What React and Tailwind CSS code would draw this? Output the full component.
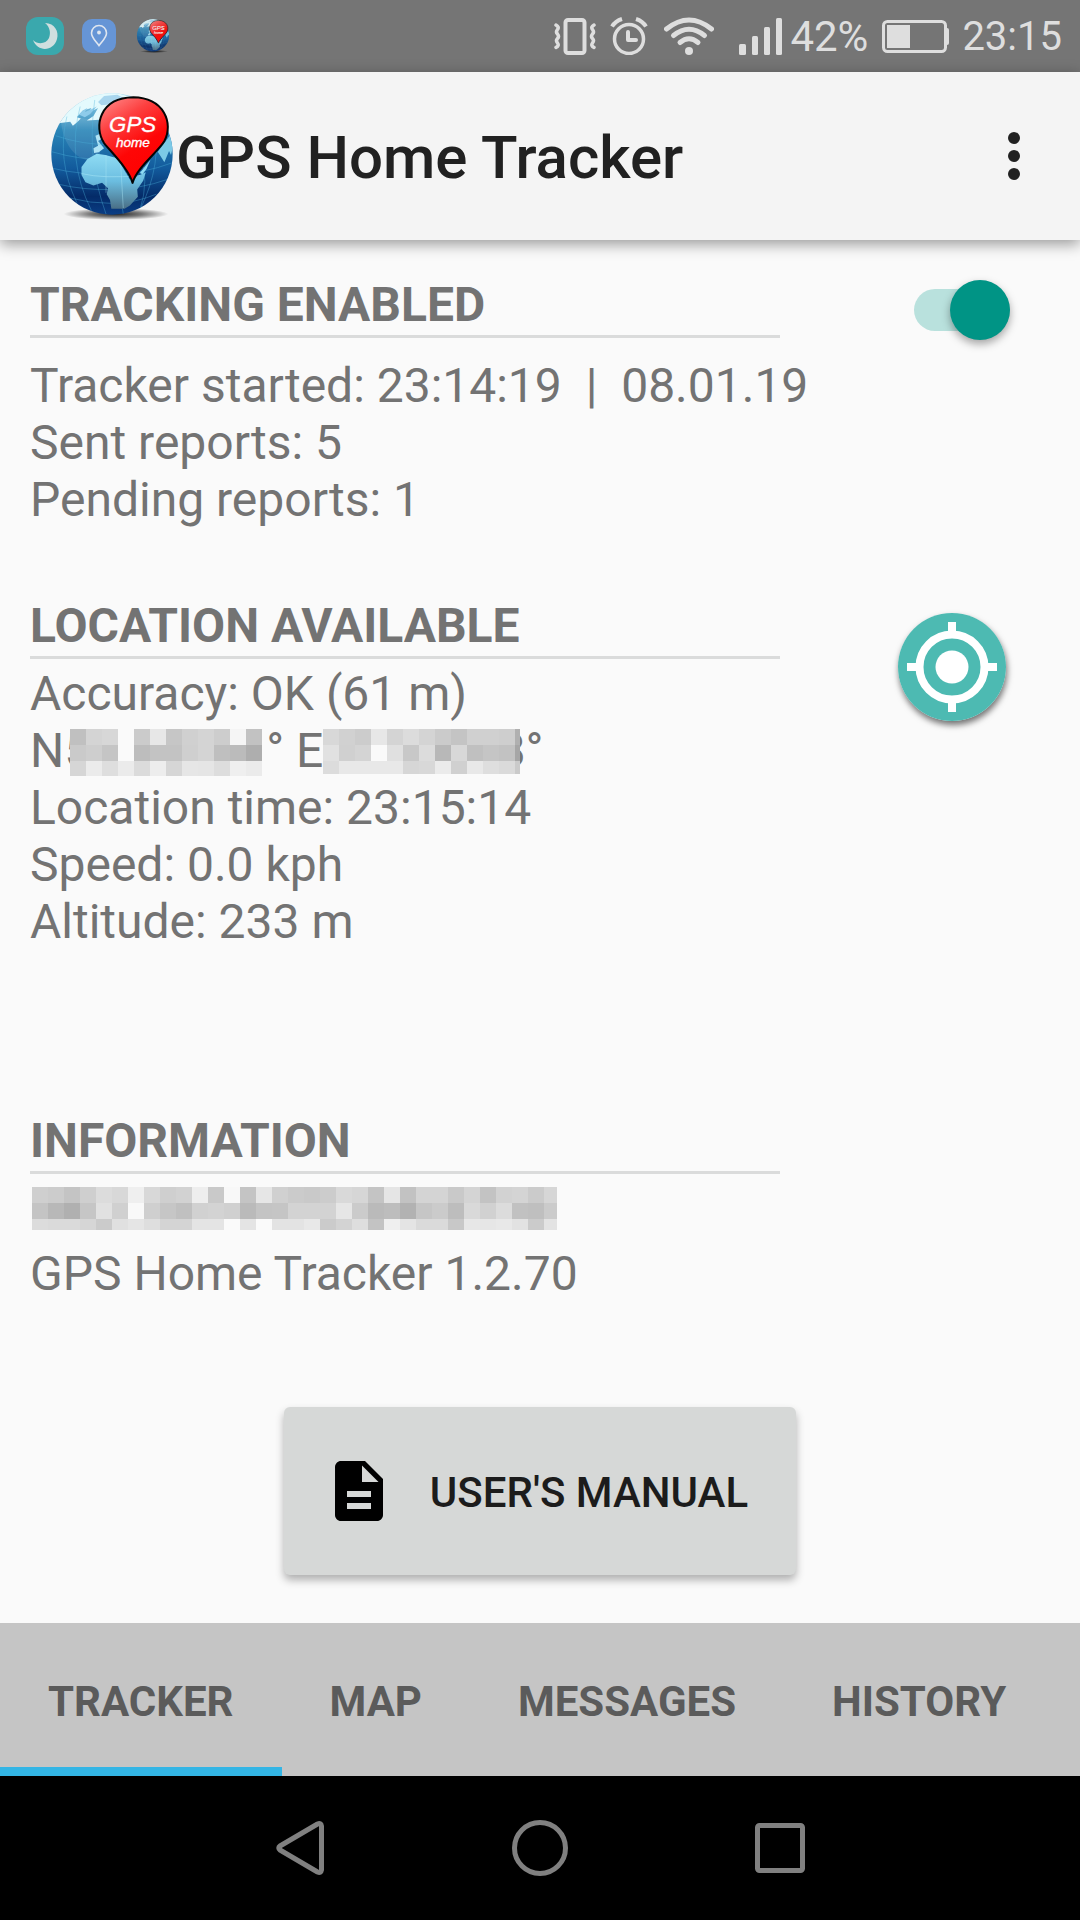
import React, { useState } from "react";
import { MdDescription } from "react-icons/md";

function GlobeLogo({ id, className }) {
  const ocean = id + "-ocean";
  const land = id + "-land";
  const pin = id + "-pin";
  const shade = id + "-shade";
  const clip = id + "-clip";
  return (
    <svg viewBox="60 36 372 386" className={className} aria-hidden="true">
      <defs>
        <linearGradient id={ocean} x1="0" y1="0" x2="0" y2="1">
          <stop offset="0" stopColor="#a9dcf0" />
          <stop offset="0.3" stopColor="#2a86b8" />
          <stop offset="0.62" stopColor="#125a9c" />
          <stop offset="0.85" stopColor="#042b68" />
          <stop offset="1" stopColor="#0a3d84" />
        </linearGradient>
        <linearGradient id={land} x1="0" y1="0" x2="0" y2="1">
          <stop offset="0" stopColor="#8fdcf4" />
          <stop offset="0.5" stopColor="#6bbde0" />
          <stop offset="1" stopColor="#4a6f86" />
        </linearGradient>
        <linearGradient id={pin} x1="0.1" y1="0" x2="0.6" y2="1">
          <stop offset="0" stopColor="#ff8a8a" />
          <stop offset="0.3" stopColor="#fd4040" />
          <stop offset="0.65" stopColor="#fe0606" />
          <stop offset="1" stopColor="#ff0000" />
        </linearGradient>
        <radialGradient id={shade}>
          <stop offset="0" stopColor="#000" stopOpacity="0.85" />
          <stop offset="0.5" stopColor="#000" stopOpacity="0.5" />
          <stop offset="1" stopColor="#000" stopOpacity="0" />
        </radialGradient>
        <clipPath id={clip}>
          <circle cx="246" cy="223" r="183" />
        </clipPath>
      </defs>
      <ellipse cx="258" cy="404" rx="158" ry="18" fill={`url(#${shade})`} />
      <circle cx="246" cy="223" r="183" fill={`url(#${ocean})`} />
      <g clipPath={`url(#${clip})`}>
        <path d="M84 130C110 80 160 40 250 36L300 50L208 120L170 122L190 108L204 84L176 98L184 84L158 92L140 112L152 116L140 128L128 138L120 126Z" fill="#e4fafd" />
        <path d="M204 66L222 48L262 44L286 56L250 72L214 76Z" fill="#a9d6ee" />
        <path d="M146 104L160 90L172 84L164 96L184 88L200 80L180 102L164 112Z" fill="#8ecbea" />
        <path d="M196 168L210 162L214 178L204 184L214 196L222 206L206 218L192 220L190 206L204 198Z" fill="#a8e0f4" />
        <path d="M92 120C120 100 160 120 210 120L210 240C150 260 96 200 92 120Z" fill="#fff" fillOpacity="0.1" />
        <g fill="none" stroke="#4db4dc" strokeOpacity="0.45" strokeWidth="2.5">
          <path d="M76 168Q160 196 240 194T420 150" />
          <path d="M64 216Q150 242 246 240T428 200" />
          <path d="M66 266Q150 286 246 284T426 250" />
          <path d="M84 314Q160 332 246 330T412 300" />
          <path d="M120 356Q180 372 246 372T380 344" />
          <path d="M110 110Q78 240 140 370" />
          <path d="M150 80Q108 240 184 394" />
          <path d="M194 60Q168 240 228 404" />
          <path d="M246 180Q262 300 280 404" />
          <path d="M372 120Q400 250 330 392" />
          <path d="M330 230Q360 300 330 392" />
        </g>
        <path d="M172 238L200 222L226 226L262 236L300 300L348 278L340 304L322 330L324 352L300 378L284 388L244 388L240 362L230 344L234 326L216 310L190 318L166 308L154 286L154 262Z" fill={`url(#${land})`} />
        <path d="M330 280L362 240L350 268L338 284Z" fill="#8fdcf4" />
        <path d="M384 216L404 190L420 168L430 200L424 226L418 214L404 248Z" fill="#7cc9e6" />
        <path d="M154 282Q220 298 330 288" fill="none" stroke="#aeeaf8" strokeOpacity="0.6" strokeWidth="2.5" />
        <path d="M228 226L228 340M272 250L280 386" fill="none" stroke="#aeeaf8" strokeOpacity="0.5" strokeWidth="2.5" />
      </g>
      <path d="M308 310C296 268 248 222 222 190C190 140 208 54 310 52C404 54 432 130 404 184C384 218 322 262 308 310Z" fill={`url(#${pin})`} stroke="#050505" strokeWidth="6" strokeLinejoin="round" />
      <text x="308" y="158" textAnchor="middle" fontFamily="Liberation Sans, sans-serif" fontSize="67" fontStyle="italic" fill="#fff" stroke="#fff" strokeWidth="1">GPS</text>
      <text x="309" y="203" textAnchor="middle" fontFamily="Liberation Sans, sans-serif" fontSize="41" fontStyle="italic" fill="#fff" stroke="#fff" strokeWidth="1">home</text>
    </svg>
  );
}

function StatusBar() {
  return (
    <header className="flex h-[72px] items-center justify-between bg-[#757575] pl-[26px] pr-[18px] text-[42px] leading-none text-[#dedede]">
      <div className="flex items-center">
        <svg viewBox="0 0 38 38" className="size-[38px]" aria-label="Night mode">
          <rect width="38" height="38" rx="12" fill="#3aa8ad" />
          <path d="M19 6C29 6 33 15 31 22C28 34 12 36 7 23C12 28 20 27 23 21C25 16 24 10 19 6Z" fill="#cfdfdf" />
        </svg>
        <svg viewBox="0 0 34 34" className="ml-[18px] size-[34px]" aria-label="Location">
          <rect width="34" height="34" rx="10" fill="#6695d6" />
          <path d="M17 26.500C14 22 9.500 19 9.500 14A7.500 7.500 0 0 1 24.500 14C24.500 19 20 22 17 26.500Z" fill="none" stroke="#dfe6f0" strokeWidth="1.600" />
          <circle cx="17" cy="13.500" r="1.900" fill="#dfe6f0" />
        </svg>
        <GlobeLogo id="small" className="ml-5 h-[34px] w-[34px] opacity-90" />
      </div>
      <div className="flex items-center">
        <svg viewBox="0 0 42 37" className="h-[37px] w-[42px]" fill="none" stroke="currentColor" aria-label="Vibrate">
          <rect x="11.500" y="2" width="19" height="33" rx="2.500" strokeWidth="4" />
          <path d="M2 7q3.500 2 1.500 4.500t0 4.500q2 2.500 0 4.500t0 4.500q2 2.500-1.500 4.500" strokeWidth="3.500" strokeLinecap="round" />
          <path d="M40 7q-3.500 2-1.500 4.500t0 4.500q-2 2.500 0 4.500t0 4.500q-2 2.500 1.500 4.500" strokeWidth="3.500" strokeLinecap="round" />
        </svg>
        <svg viewBox="0 0 38 38" className="ml-[14px] size-[38px]" fill="none" stroke="currentColor" aria-label="Alarm">
          <circle cx="19" cy="22" r="14.500" strokeWidth="3.500" />
          <path d="M18 15V23H26" strokeWidth="4" strokeLinecap="round" strokeLinejoin="round" />
          <path d="M2 9.500Q5.500 4 12 2M36 9.500Q32.500 4 26 2" strokeWidth="4" />
        </svg>
        <svg viewBox="0 0 50 38" className="ml-4 h-[38px] w-[50px]" fill="none" stroke="currentColor" strokeWidth="5" strokeLinecap="round" aria-label="Wi-Fi">
          <path d="M2.500 12Q25-6 47.500 12" />
          <path d="M9.500 18.500Q25 6 40.500 18.500" />
          <path d="M16 25.500Q25 18 34 25.500" />
          <circle cx="25" cy="34" r="4" fill="currentColor" stroke="none" />
        </svg>
        <svg viewBox="0 0 44 37" className="ml-6 h-[37px] w-[44px]" fill="currentColor" aria-label="Signal">
          <rect x="1" y="26" width="7" height="11" rx="1.500" />
          <rect x="14" y="18" width="6" height="19" rx="1.500" />
          <rect x="26" y="9" width="6" height="28" rx="1.500" />
          <rect x="38" y="0" width="6" height="37" rx="1.500" />
        </svg>
        <span className="ml-2 pt-[2px]">42%</span>
        <svg viewBox="0 0 68 33" className="ml-[14px] h-[33px] w-[68px]" fill="currentColor" aria-label="Battery">
          <rect x="1.500" y="1.500" width="62" height="30" rx="4" fill="none" stroke="currentColor" strokeWidth="3" />
          <rect x="5" y="5" width="23" height="23" />
          <path d="M64 8H65Q67 8 67 10V23Q67 25 65 25H64Z" />
        </svg>
        <time className="ml-3 pt-[2px] text-[40px] leading-none">23:15</time>
      </div>
    </header>
  );
}

function AppBar() {
  return (
    <div className="relative flex h-[168px] items-center bg-[#f4f4f4] pl-[50px] pr-[46px] shadow-[0_4px_14px_rgba(0,0,0,0.4)]">
      <GlobeLogo id="large" className="h-[128px] w-[124px]" />
      <h1 className="ml-[2px] flex-1 pt-1 text-[60px] font-medium leading-[72px] text-[#212121]">GPS Home Tracker</h1>
      <button type="button" aria-label="More options" className="flex h-20 w-10 items-center justify-center">
        <svg viewBox="0 0 14 50" className="h-[50px] w-[14px]" fill="#212121">
          <circle cx="7" cy="7" r="6" />
          <circle cx="7" cy="25" r="6" />
          <circle cx="7" cy="43" r="6" />
        </svg>
      </button>
    </div>
  );
}

const LATITUDE = [
  "c0 d4 d7 fa cb e7 c6 d0 d4 cd f5 c2",
  "ca ce c5 fa bd c3 c3 cf d4 bf bb ae",
  "d6 eb de eb db ed d6 e6 e5 dd ef eb",
];
const LONGITUDE = [
  "d8 d1 cc e7 d4 dc d4 cb c4 d0 d0 ce b0",
  "e1 d0 d4 fa e0 c8 dc b8 d8 c0 c5 c2 a6",
  "dc e8 e8 e8 e8 d6 d8 eb d0 e8 de da ca",
];
const ACCOUNT = [
  "cf cc c4 cf dc d8 ef d8 cf d2 ee c9 f8 c4 e6 d0 cb c9 cc d9 d6 c4 e5 c2 d4 d4 c9 d4 c3 d2 d4 cb d6",
  "c4 b8 b0 c6 e1 d0 f9 cf c6 c0 d1 d3 d0 ba c4 c5 d3 d3 d3 e6 cb ba bd b2 c6 cb bd d9 d1 dc c1 bf cb",
  "dc da da d6 cb e0 e5 de d4 d4 e4 e4 fa e4 fa e3 e3 e8 cb d3 de c3 ef e4 da da c8 e7 e6 e8 e2 cb e3",
];

function Mosaic({ rows, width, height, className }) {
  return (
    <svg viewBox={`0 0 ${width} ${height}`} width={width} height={height} className={className} shapeRendering="crispEdges" aria-label="Hidden">
      {rows.map((row, y) =>
        row.split(" ").map((v, x) => (
          <rect key={`${x}-${y}`} x={x * 16} y={y * 16} width="16" height="16" fill={`#${v}${v}${v}`} />
        ))
      )}
    </svg>
  );
}

function Section({ title, side, children, className }) {
  return (
    <section className={`grid grid-cols-[5fr_2fr] ${className}`}>
      <div className="min-w-0 whitespace-nowrap">
        <h2 className="border-b-[3px] border-[#dadbdb] pb-[2px] font-bold">{title}</h2>
        {children}
      </div>
      <div className="flex items-start justify-end">{side}</div>
    </section>
  );
}

const TABS = ["TRACKER", "MAP", "MESSAGES", "HISTORY"];

export default function App() {
  const [enabled, setEnabled] = useState(true);
  const [tab, setTab] = useState("TRACKER");
  return (
    <div className="flex min-h-screen flex-col bg-[#fafafa] font-[Roboto,sans-serif]">
      <StatusBar />
      <AppBar />
      <main className="flex flex-1 flex-col pb-12 pl-[30px] pt-9 text-[48px] leading-[57px] text-[#737373]">
        <Section
          title="TRACKING ENABLED"
          className=""
          side={
            <input
              type="checkbox"
              role="switch"
              aria-label="Tracking enabled"
              checked={enabled}
              onChange={(e) => setEnabled(e.target.checked)}
              className="mr-[70px] mt-[13px] h-[42px] w-24 appearance-none rounded-full bg-[#b9e1dd] before:-mt-[9px] before:block before:size-[60px] before:rounded-full before:bg-[#009485] before:shadow-[0_4px_8px_rgba(0,0,0,0.35)] checked:before:ml-auto"
            />
          }
        >
          <div className="mt-[19px]">
            <p className="whitespace-pre">{"Tracker started: 23:14:19  |  08.01.19"}</p>
            <p>Sent reports: 5</p>
            <p>Pending reports: 1</p>
          </div>
        </Section>

        <Section
          title="LOCATION AVAILABLE"
          className="mt-[69px]"
          side={
            <button type="button" aria-label="Locate" className="mr-[74px] mt-4 rounded-full shadow-[1px_4px_6px_rgba(0,0,0,0.55)]">
              <svg viewBox="0 0 108 108" className="size-[108px]">
                <circle cx="54" cy="54" r="54" fill="#4dbab2" />
                <g fill="none" stroke="#fff" strokeWidth="8">
                  <circle cx="54" cy="54" r="32.500" />
                  <path d="M54 9V20M54 88V99M9 54H20M88 54H99" />
                </g>
                <circle cx="54" cy="54" r="16.500" fill="#fff" />
              </svg>
            </button>
          }
        >
          <div className="mt-[6px]">
            <p>Accuracy: OK (61 m)</p>
            <p className="flex">
              <span>N</span>
              <span className="relative w-[202px]">
                5
                <Mosaic rows={LATITUDE} width={192} height={47} className="absolute left-[6px] top-[7px]" />
              </span>
              <span className="whitespace-pre">{"° E"}</span>
              <span className="relative w-[202px] text-right">
                8
                <Mosaic rows={LONGITUDE} width={197} height={45} className="absolute left-0 top-[7px]" />
              </span>
              <span>°</span>
            </p>
            <p>Location time: 23:15:14</p>
            <p>Speed: 0.0 kph</p>
            <p>Altitude: 233 m</p>
          </div>
        </Section>

        <Section title="INFORMATION" className="mt-[162px]">
          <Mosaic rows={ACCOUNT} width={525} height={43} className="ml-[2px] mt-[13px]" />
          <p className="mt-[15px]">GPS Home Tracker 1.2.70</p>
        </Section>

        <div className="mt-auto flex justify-center pr-[30px]">
          <button type="button" className="flex h-[168px] items-center gap-[35px] rounded-md bg-[#d6d8d7] pl-[39px] pr-12 text-[42px] font-medium text-[#1c1c1c] shadow-[0_5px_8px_rgba(0,0,0,0.3)]">
            <MdDescription className="size-[72px] text-black" />
            <span className="pt-[2px]">USER'S MANUAL</span>
          </button>
        </div>
      </main>

      <div role="tablist" className="flex h-[153px] bg-[#c5c5c5] text-[42px] font-bold text-[#5b5b5b]">
        {TABS.map((name) => (
          <button
            key={name}
            type="button"
            role="tab"
            aria-selected={tab === name}
            onClick={() => setTab(name)}
            className="border-b-[9px] border-transparent px-12 pt-[13px] aria-selected:border-[#33b5e5]"
          >
            {name}
          </button>
        ))}
      </div>

      <nav className="flex h-36 items-center justify-center gap-[184px] bg-black text-[#808080]">
        <button type="button" aria-label="Back">
          <svg viewBox="0 0 56 60" className="h-[60px] w-[56px]" fill="none" stroke="currentColor" strokeWidth="5" strokeLinejoin="round">
            <path d="M49.500 8V52Q49 55.500 45.500 54L8 32Q5.500 30 8 28L45.500 6Q49 4.500 49.500 8Z" />
          </svg>
        </button>
        <button type="button" aria-label="Home">
          <svg viewBox="0 0 56 56" className="size-[56px]" fill="none" stroke="currentColor" strokeWidth="5">
            <circle cx="28" cy="28" r="25.500" />
          </svg>
        </button>
        <button type="button" aria-label="Recent apps">
          <svg viewBox="0 0 56 56" className="size-[56px]" fill="none" stroke="currentColor" strokeWidth="5">
            <rect x="5.500" y="5.500" width="45" height="45" rx="2" />
          </svg>
        </button>
      </nav>
    </div>
  );
}
